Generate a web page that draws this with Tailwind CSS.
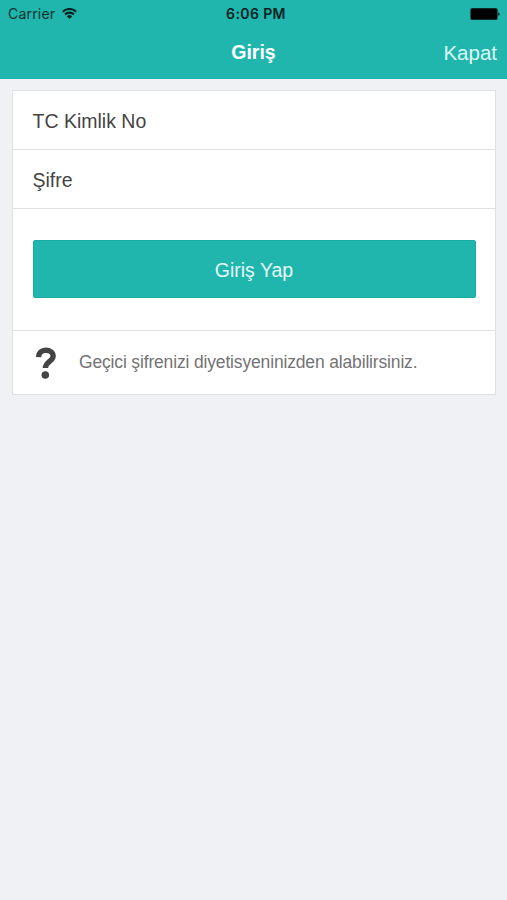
<!DOCTYPE html>
<html lang="tr">
<head>
  <meta charset="UTF-8">
  <meta name="viewport" content="width=device-width, initial-scale=1.0">
  <title>Giriş</title>
  <script src="https://cdn.jsdelivr.net/npm/@tailwindcss/browser@4"></script>
</head>
<body class="min-h-screen bg-[#eff1f5] font-['Liberation_Sans',sans-serif] text-[#444]">

  <header class="h-[79px] bg-[#20b5ad]">
    <!-- status bar -->
    <div class="grid h-[27px] grid-cols-3 items-center px-[7px] font-['Inter',sans-serif] text-sm leading-none">
      <div class="flex items-center gap-[7px] pl-px text-[#06302e]">
        <span class="tracking-[0.2px]">Carrier</span>
        <svg class="h-[11px] w-[15px]" viewBox="0 0 15 11" fill="none" stroke="#032321" stroke-width="2.1">
          <path d="M0.8 3.7a9.6 9.6 0 0 1 13.4 0"/>
          <path d="M3 6.5a6.3 6.3 0 0 1 9 0"/>
          <path d="M7.5 11L4.9 8.4a3.700 3.700 0 0 1 5.200 0z" fill="#032321" stroke="none"/>
        </svg>
      </div>
      <span class="pl-[5px] text-center font-semibold tracking-[0.4px] text-[#04211f]">6:06 PM</span>
      <svg class="h-3 w-[30px] justify-self-end" viewBox="0 0 30 12" fill="#000">
        <rect x="0.5" y="0.2" width="27" height="11.6" rx="1.5"/>
        <path d="M28.3 4.2a1.9 1.9 0 0 1 0 3.6z"/>
      </svg>
    </div>

    <div class="grid h-[52px] grid-cols-3 items-center px-2.5 leading-none text-white">
      <span></span>
      <h1 class="text-center text-[19.5px] font-bold">Giriş</h1>
      <button class="justify-self-end text-[20.5px] text-[#dcf8f6]">Kapat</button>
    </div>
  </header>

  <main class="pl-3 pr-[11px] pt-[11px]">
    <form class="border border-[#dfe0e3] bg-white text-[19.5px]">
      <div class="flex h-[59px] items-center border-b border-[#dfe0e3] pl-[19.5px] pt-1">TC Kimlik No</div>
      <div class="flex h-[59px] items-center border-b border-[#dfe0e3] pl-[19.5px] pt-1">Şifre</div>
      <div class="h-[122px] border-b border-[#dfe0e3] px-[19.5px] pt-[31px]">
        <button type="button" class="h-[58px] w-full rounded-xs border border-[#19ada5] bg-[#20b5ad] pt-[3px] text-[#e4fbf9]">Giriş Yap</button>
      </div>
      <div class="flex h-[63px] items-center pl-[22px]">
        <svg class="h-8 w-[22px]" viewBox="0 0 22 32" fill="none">
          <path d="M3.500 10.200C3.700 5.800 6.600 3.300 10.800 3.300c4.300 0 7.300 2.200 7.300 5.900 0 5.200-7.700 5.200-7.700 11.800" stroke="#444" stroke-width="5.400"/>
          <circle cx="10.300" cy="28" r="3.800" fill="#444"/>
        </svg>
        <span class="ml-[22px] text-[17.5px] tracking-[-0.16px] text-[#737373]">Geçici şifrenizi diyetisyeninizden alabilirsiniz.</span>
      </div>
    </form>
  </main>

</body>
</html>
